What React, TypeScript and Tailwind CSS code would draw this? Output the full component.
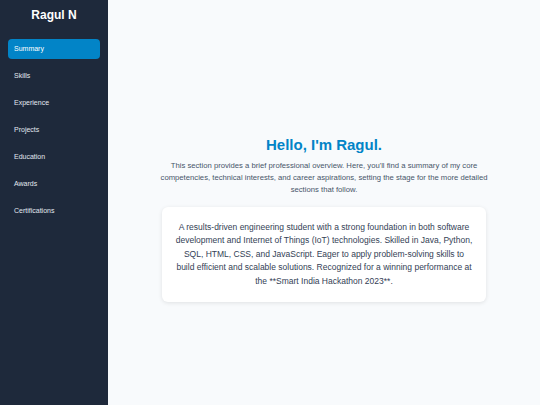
import React from "react";

const sections = ["Summary", "Skills", "Experience", "Projects", "Education", "Awards", "Certifications"];

export default function App() {
    const active = "Summary";

    return (
        <div
            className="flex h-[405px] w-[540px] overflow-hidden bg-[#f8fafc]"
            style={{ fontFamily: '"Liberation Sans", Arial, sans-serif' }}
        >
            {/* Sidebar */}
            <aside className="w-[108px] shrink-0 bg-[#1e293b] px-2 pt-[8px]">
                <h1 className="text-center text-[12px] font-bold leading-[15px] text-white">Ragul N</h1>
                <nav className="mt-[16px] flex flex-col gap-[7px]">
                    {sections.map((s) => (
                        <button
                            key={s}
                            className={`h-[20px] w-[92px] rounded-[4px] px-[6px] text-left text-[7px] ${
                                s === active ? "bg-[#0284c7] text-white" : "text-[#e2e8f0]"
                            }`}
                        >
                            {s}
                        </button>
                    ))}
                </nav>
            </aside>

            {/* Main */}
            <main className="flex flex-1 flex-col items-center justify-center pt-[32px]">
                <h2 className="text-[15px] font-bold leading-[20px] text-[#0284c7]">Hello, I'm Ragul.</h2>
                <p className="mt-[5px] w-[330px] text-center text-[7.7px] leading-[12px] text-[#475569]">
                    This section provides a brief professional overview. Here, you'll find a summary of my core
                    competencies, technical interests, and career aspirations, setting the stage for the more detailed
                    sections that follow.
                </p>
                <div className="mt-[11px] w-[324px] rounded-[6px] bg-white px-[13px] py-[14px] shadow-[0_1px_4px_rgba(0,0,0,0.1)]">
                    <p className="text-center text-[8.5px] leading-[13.5px] text-[#334155]">
                        A results-driven engineering student with a strong foundation in both software development
                        and Internet of Things (IoT) technologies. Skilled in Java, Python, SQL, HTML, CSS, and
                        JavaScript. Eager to apply problem-solving skills to build efficient and scalable solutions.
                        Recognized for a winning performance at the **Smart India Hackathon 2023**.
                    </p>
                </div>
            </main>
        </div>
    );
}
